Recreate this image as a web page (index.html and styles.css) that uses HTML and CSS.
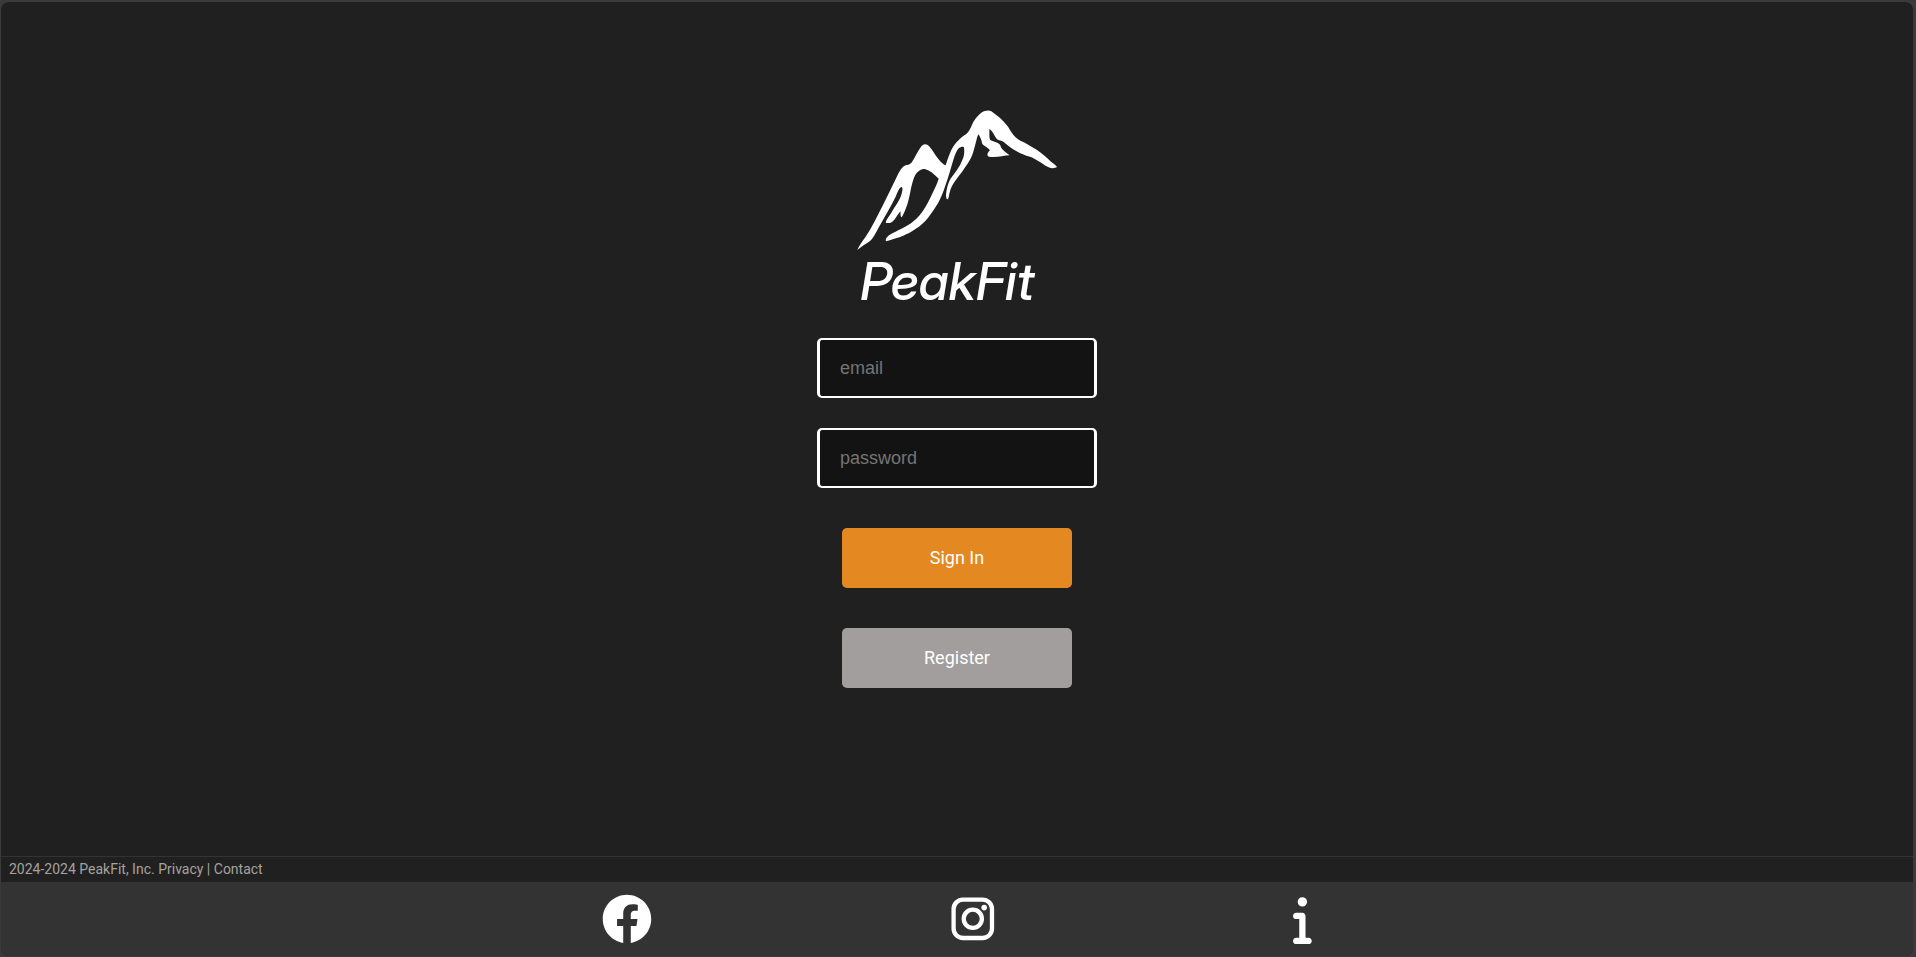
FILE: index.html
```html
<!DOCTYPE html>
<html lang="en">
<head>
  <meta charset="utf-8">
  <title>PeakFit</title>
  <link rel="stylesheet" href="styles.css">
</head>
<body>
  <div class="app">
    <main class="login">
      <div class="logo">
        <svg class="logo-mark" viewBox="0 0 600 423" aria-hidden="true">
          <path d="M1 420C5 410 14 397 25 382C45 352 60 320 78 285C94 253 107 227 123 193C130 180 136 168 149 165C158 164 160 162 165 156C174 142 183 123 193 109C199 102 206 101 213 106C224 115 235 137 249 153C255 160 261 164 266 166C271 150 278 130 284 118C294 99 311 83 327 73C336 66 341 54 346 42C353 28 368 9 381 4C389 1 398 1 403 4C424 19 446 37 459 60C468 76 479 87 492 93C522 107 554 127 583 156C590 161 597 166 600 171C594 175 584 176 575 172C549 158 533 142 508 137C481 127 463 116 440 96C434 92 425 91 420 88C413 79 407 62 397 57C398 69 395 85 401 91C410 95 425 98 430 106C431 117 444 125 458 136C439 137 419 143 396 140C388 137 391 128 399 121C390 109 377 108 375 99C373 87 368 78 364 73C359 83 357 99 351 118C345 145 331 163 319 180C304 201 284 223 279 244C276 253 276 262 273 267C269 270 267 263 267 255C268 238 273 220 280 207C293 189 309 170 316 150C323 135 322 124 321 112C321 109 310 110 304 116C292 130 285 166 273 203C262 236 254 262 239 286C214 326 198 345 165 364C142 378 119 385 87 394C84 386 90 381 97 375C121 361 150 351 170 333C193 317 209 287 225 253C233 236 240 222 245 206C230 191 217 180 203 177C188 175 174 191 169 209C160 234 159 265 147 294C143 306 138 315 134 322C130 321 131 312 130 304C121 314 116 328 106 335C99 341 93 338 86 338C88 326 97 319 103 308C114 289 130 271 135 247C137 238 137 231 133 231C126 234 122 246 117 258C103 287 84 319 68 347C58 365 47 387 39 393C29 401 13 409 1 420Z"/>
        </svg>
        <h1 class="logo-name">PeakFit</h1>
      </div>
      <form class="login-form">
        <input class="field" type="email" placeholder="email" aria-label="email">
        <input class="field" type="password" placeholder="password" aria-label="password">
        <button class="button button-primary" type="submit">Sign In</button>
        <button class="button button-secondary" type="button">Register</button>
      </form>
    </main>
    <footer class="footer">
      <p class="legal">2024-2024 PeakFit, Inc. <a href="#">Privacy</a> | <a href="#">Contact</a></p>
      <nav class="social">
        <div class="social-links">
          <a href="#" aria-label="Facebook">
            <svg class="icon" viewBox="0 0 512 512"><path d="M504 256C504 119 393 8 256 8S8 119 8 256c0 123.800 90.700 226.400 209.300 245V327.700h-63V256h63v-54.600c0-62.200 37-96.500 93.700-96.500 27.100 0 55.500 4.800 55.500 4.800v61h-31.300c-30.800 0-40.400 19.100-40.400 38.700V256h68.800l-11 71.700h-57.800V501C413.300 482.400 504 379.800 504 256z"/></svg>
          </a>
          <a href="#" aria-label="Instagram">
            <svg class="icon" viewBox="0 0 44 50"><g fill="none" stroke="currentColor" stroke-width="4.300"><rect x="2.600" y="5.600" width="38.400" height="38.400" rx="9.500"/><circle cx="21.800" cy="24.800" r="9.100"/></g><circle cx="33.200" cy="13.600" r="2.800"/></svg>
          </a>
          <a href="#" aria-label="Information">
            <svg class="icon" viewBox="0 0 192 512"><path d="M48 80a48 48 0 1 1 96 0A48 48 0 1 1 48 80zM0 224c0-17.700 14.300-32 32-32H96c17.700 0 32 14.300 32 32V448h32c17.700 0 32 14.300 32 32s-14.300 32-32 32H32c-17.700 0-32-14.300-32-32s14.300-32 32-32H64V256H32c-17.700 0-32-14.300-32-32z"/></svg>
          </a>
        </div>
      </nav>
    </footer>
  </div>
</body>
</html>
```
FILE: styles.css
```css
* {
  box-sizing: border-box;
}

body {
  margin: 0;
  padding: 2px 3px 1px 1px;
  background: #3a3a3a;
  font-family: Roboto, sans-serif;
}

.app {
  display: flex;
  flex-direction: column;
  min-height: calc(100vh - 3px);
  border-radius: 8px;
  overflow: hidden;
  background: #202020;
}

.login {
  flex: 1;
  display: flex;
  flex-direction: column;
  align-items: center;
  gap: 26px;
  padding-top: 108px;
}

.logo {
  display: flex;
  flex-direction: column;
  color: #fff;
}

.logo-mark {
  width: 200px;
  fill: currentColor;
}

.logo-name {
  margin: 0;
  padding-left: 3px;
  font: italic 500 52px/61px "Inter Display", Inter, sans-serif;
  font-variation-settings: "opsz" 32;
}

.login-form {
  display: flex;
  flex-direction: column;
  align-items: center;
}

.field {
  width: 280px;
  height: 60px;
  margin-bottom: 30px;
  padding: 0 20px;
  border: solid #fff;
  border-width: 2px 3px;
  border-radius: 5px;
  background: #131313;
  color: #fff;
  font: 18px "Liberation Sans", sans-serif;
}

.field::placeholder {
  color: #757575;
}

.button {
  width: 230px;
  height: 60px;
  padding: 0 0 2px;
  border: 0;
  border-radius: 5px;
  color: #fff;
  font: 400 18px Roboto, sans-serif;
}

.button-primary {
  margin: 10px 0 40px;
  background: #e48921;
}

.button-secondary {
  background: #a29e9d;
}

.legal {
  margin: 0;
  padding: 0 8px;
  border-top: 1px solid #333;
  color: #a6a29f;
  font-size: 14px;
  line-height: 25px;
}

.legal a {
  color: inherit;
  text-decoration: none;
}

.social {
  padding: 12px 0;
  background: #333;
}

.social-links {
  display: flex;
  justify-content: space-between;
  max-width: 710px;
  margin: 0 auto;
}

.social a {
  display: flex;
  color: #fff;
}

.icon {
  height: 50px;
  fill: currentColor;
}
```
